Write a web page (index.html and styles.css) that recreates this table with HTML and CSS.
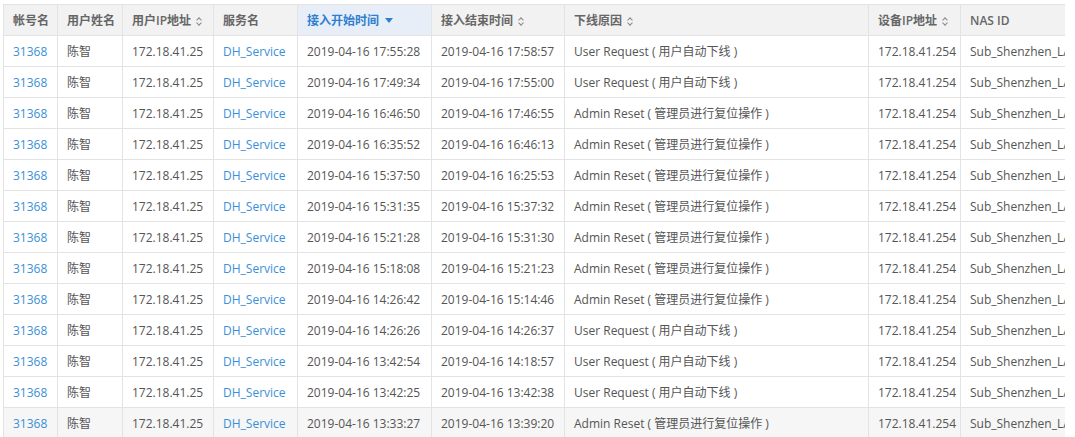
FILE: index.html
```html
<!DOCTYPE html>
<html lang="zh-CN">
<head>
<meta charset="utf-8">
<title>在线记录</title>
<link rel="stylesheet" href="styles.css">
</head>
<body>
<div class="wrap">
<table class="grid">
<colgroup>
<col class="c1"><col class="c2"><col class="c3"><col class="c4"><col class="c5"><col class="c6"><col class="c7"><col class="c8"><col class="c9">
</colgroup>
<thead>
<tr>
<th>帐号名</th>
<th>用户姓名</th>
<th>用户IP地址 <span class="sort"></span></th>
<th>服务名</th>
<th class="sorted">接入开始时间 <span class="desc"></span></th>
<th>接入结束时间 <span class="sort"></span></th>
<th>下线原因 <span class="sort"></span></th>
<th>设备IP地址 <span class="sort"></span></th>
<th>NAS ID</th>
</tr>
</thead>
<tbody>
<tr><td class="lk">31368</td><td>陈智</td><td>172.18.41.25</td><td class="lk">DH_Service</td><td>2019-04-16 17:55:28</td><td>2019-04-16 17:58:57</td><td>User Request ( 用户自动下线 )</td><td>172.18.41.254</td><td>Sub_Shenzhen_LAN</td></tr>
<tr><td class="lk">31368</td><td>陈智</td><td>172.18.41.25</td><td class="lk">DH_Service</td><td>2019-04-16 17:49:34</td><td>2019-04-16 17:55:00</td><td>User Request ( 用户自动下线 )</td><td>172.18.41.254</td><td>Sub_Shenzhen_LAN</td></tr>
<tr><td class="lk">31368</td><td>陈智</td><td>172.18.41.25</td><td class="lk">DH_Service</td><td>2019-04-16 16:46:50</td><td>2019-04-16 17:46:55</td><td>Admin Reset ( 管理员进行复位操作 )</td><td>172.18.41.254</td><td>Sub_Shenzhen_LAN</td></tr>
<tr><td class="lk">31368</td><td>陈智</td><td>172.18.41.25</td><td class="lk">DH_Service</td><td>2019-04-16 16:35:52</td><td>2019-04-16 16:46:13</td><td>Admin Reset ( 管理员进行复位操作 )</td><td>172.18.41.254</td><td>Sub_Shenzhen_LAN</td></tr>
<tr><td class="lk">31368</td><td>陈智</td><td>172.18.41.25</td><td class="lk">DH_Service</td><td>2019-04-16 15:37:50</td><td>2019-04-16 16:25:53</td><td>Admin Reset ( 管理员进行复位操作 )</td><td>172.18.41.254</td><td>Sub_Shenzhen_LAN</td></tr>
<tr><td class="lk">31368</td><td>陈智</td><td>172.18.41.25</td><td class="lk">DH_Service</td><td>2019-04-16 15:31:35</td><td>2019-04-16 15:37:32</td><td>Admin Reset ( 管理员进行复位操作 )</td><td>172.18.41.254</td><td>Sub_Shenzhen_LAN</td></tr>
<tr><td class="lk">31368</td><td>陈智</td><td>172.18.41.25</td><td class="lk">DH_Service</td><td>2019-04-16 15:21:28</td><td>2019-04-16 15:31:30</td><td>Admin Reset ( 管理员进行复位操作 )</td><td>172.18.41.254</td><td>Sub_Shenzhen_LAN</td></tr>
<tr><td class="lk">31368</td><td>陈智</td><td>172.18.41.25</td><td class="lk">DH_Service</td><td>2019-04-16 15:18:08</td><td>2019-04-16 15:21:23</td><td>Admin Reset ( 管理员进行复位操作 )</td><td>172.18.41.254</td><td>Sub_Shenzhen_LAN</td></tr>
<tr><td class="lk">31368</td><td>陈智</td><td>172.18.41.25</td><td class="lk">DH_Service</td><td>2019-04-16 14:26:42</td><td>2019-04-16 15:14:46</td><td>Admin Reset ( 管理员进行复位操作 )</td><td>172.18.41.254</td><td>Sub_Shenzhen_LAN</td></tr>
<tr><td class="lk">31368</td><td>陈智</td><td>172.18.41.25</td><td class="lk">DH_Service</td><td>2019-04-16 14:26:26</td><td>2019-04-16 14:26:37</td><td>User Request ( 用户自动下线 )</td><td>172.18.41.254</td><td>Sub_Shenzhen_LAN</td></tr>
<tr><td class="lk">31368</td><td>陈智</td><td>172.18.41.25</td><td class="lk">DH_Service</td><td>2019-04-16 13:42:54</td><td>2019-04-16 14:18:57</td><td>User Request ( 用户自动下线 )</td><td>172.18.41.254</td><td>Sub_Shenzhen_LAN</td></tr>
<tr><td class="lk">31368</td><td>陈智</td><td>172.18.41.25</td><td class="lk">DH_Service</td><td>2019-04-16 13:42:25</td><td>2019-04-16 13:42:38</td><td>User Request ( 用户自动下线 )</td><td>172.18.41.254</td><td>Sub_Shenzhen_LAN</td></tr>
<tr class="hover"><td class="lk">31368</td><td>陈智</td><td>172.18.41.25</td><td class="lk">DH_Service</td><td>2019-04-16 13:33:27</td><td>2019-04-16 13:39:20</td><td>Admin Reset ( 管理员进行复位操作 )</td><td>172.18.41.254</td><td>Sub_Shenzhen_LAN</td></tr>
</tbody>
</table>
</div>
</body>
</html>
```
FILE: styles.css
```css
html, body {
  margin: 0;
  padding: 0;
  background: #fff;
}
body {
  font-family: "Open Sans", "Noto Sans CJK SC", sans-serif;
  font-size: 12px;
  color: #555;
}
.wrap {
  margin: 4px 0 0 3px;
  width: 1062px;
  height: 433px;
  overflow: hidden;
}
.grid {
  border-collapse: collapse;
  table-layout: fixed;
  width: 1110px;
}
.c1 { width: 54px; }
.c2 { width: 65px; }
.c3 { width: 91px; }
.c4 { width: 84px; }
.c5 { width: 134px; }
.c6 { width: 133px; }
.c7 { width: 304px; }
.c8 { width: 92px; }
.c9 { width: 153px; }
.grid th, .grid td {
  border: 1px solid #e3e3e3;
  height: 31px;
  padding: 0 8px 0 9px;
  text-align: left;
  white-space: nowrap;
  overflow: hidden;
  box-sizing: border-box;
}
.grid th {
  background: #f2f2f2;
  font-weight: 600;
  color: #666;
}
.grid th.sorted {
  background: #e8eef7;
  color: #2f7fd0;
}
.grid td.lk {
  color: #3a8fd9;
}
.grid tr.hover td {
  background: #f6f6f6;
}
.sort {
  display: inline-block;
  width: 7px;
  height: 9px;
  margin-left: 2px;
  vertical-align: -1px;
  position: relative;
}
.sort::before, .sort::after {
  content: "";
  position: absolute;
  left: 1px;
  width: 3px;
  height: 3px;
  border-left: 1.3px solid #888;
  border-top: 1.3px solid #888;
}
.sort::before {
  top: 1px;
  transform: rotate(45deg);
}
.sort::after {
  top: 4px;
  transform: rotate(225deg);
}
.desc {
  display: inline-block;
  width: 0;
  height: 0;
  margin-left: 3px;
  vertical-align: 2px;
  border-left: 4.5px solid transparent;
  border-right: 4.5px solid transparent;
  border-top: 5px solid #2f7fd0;
}
```
